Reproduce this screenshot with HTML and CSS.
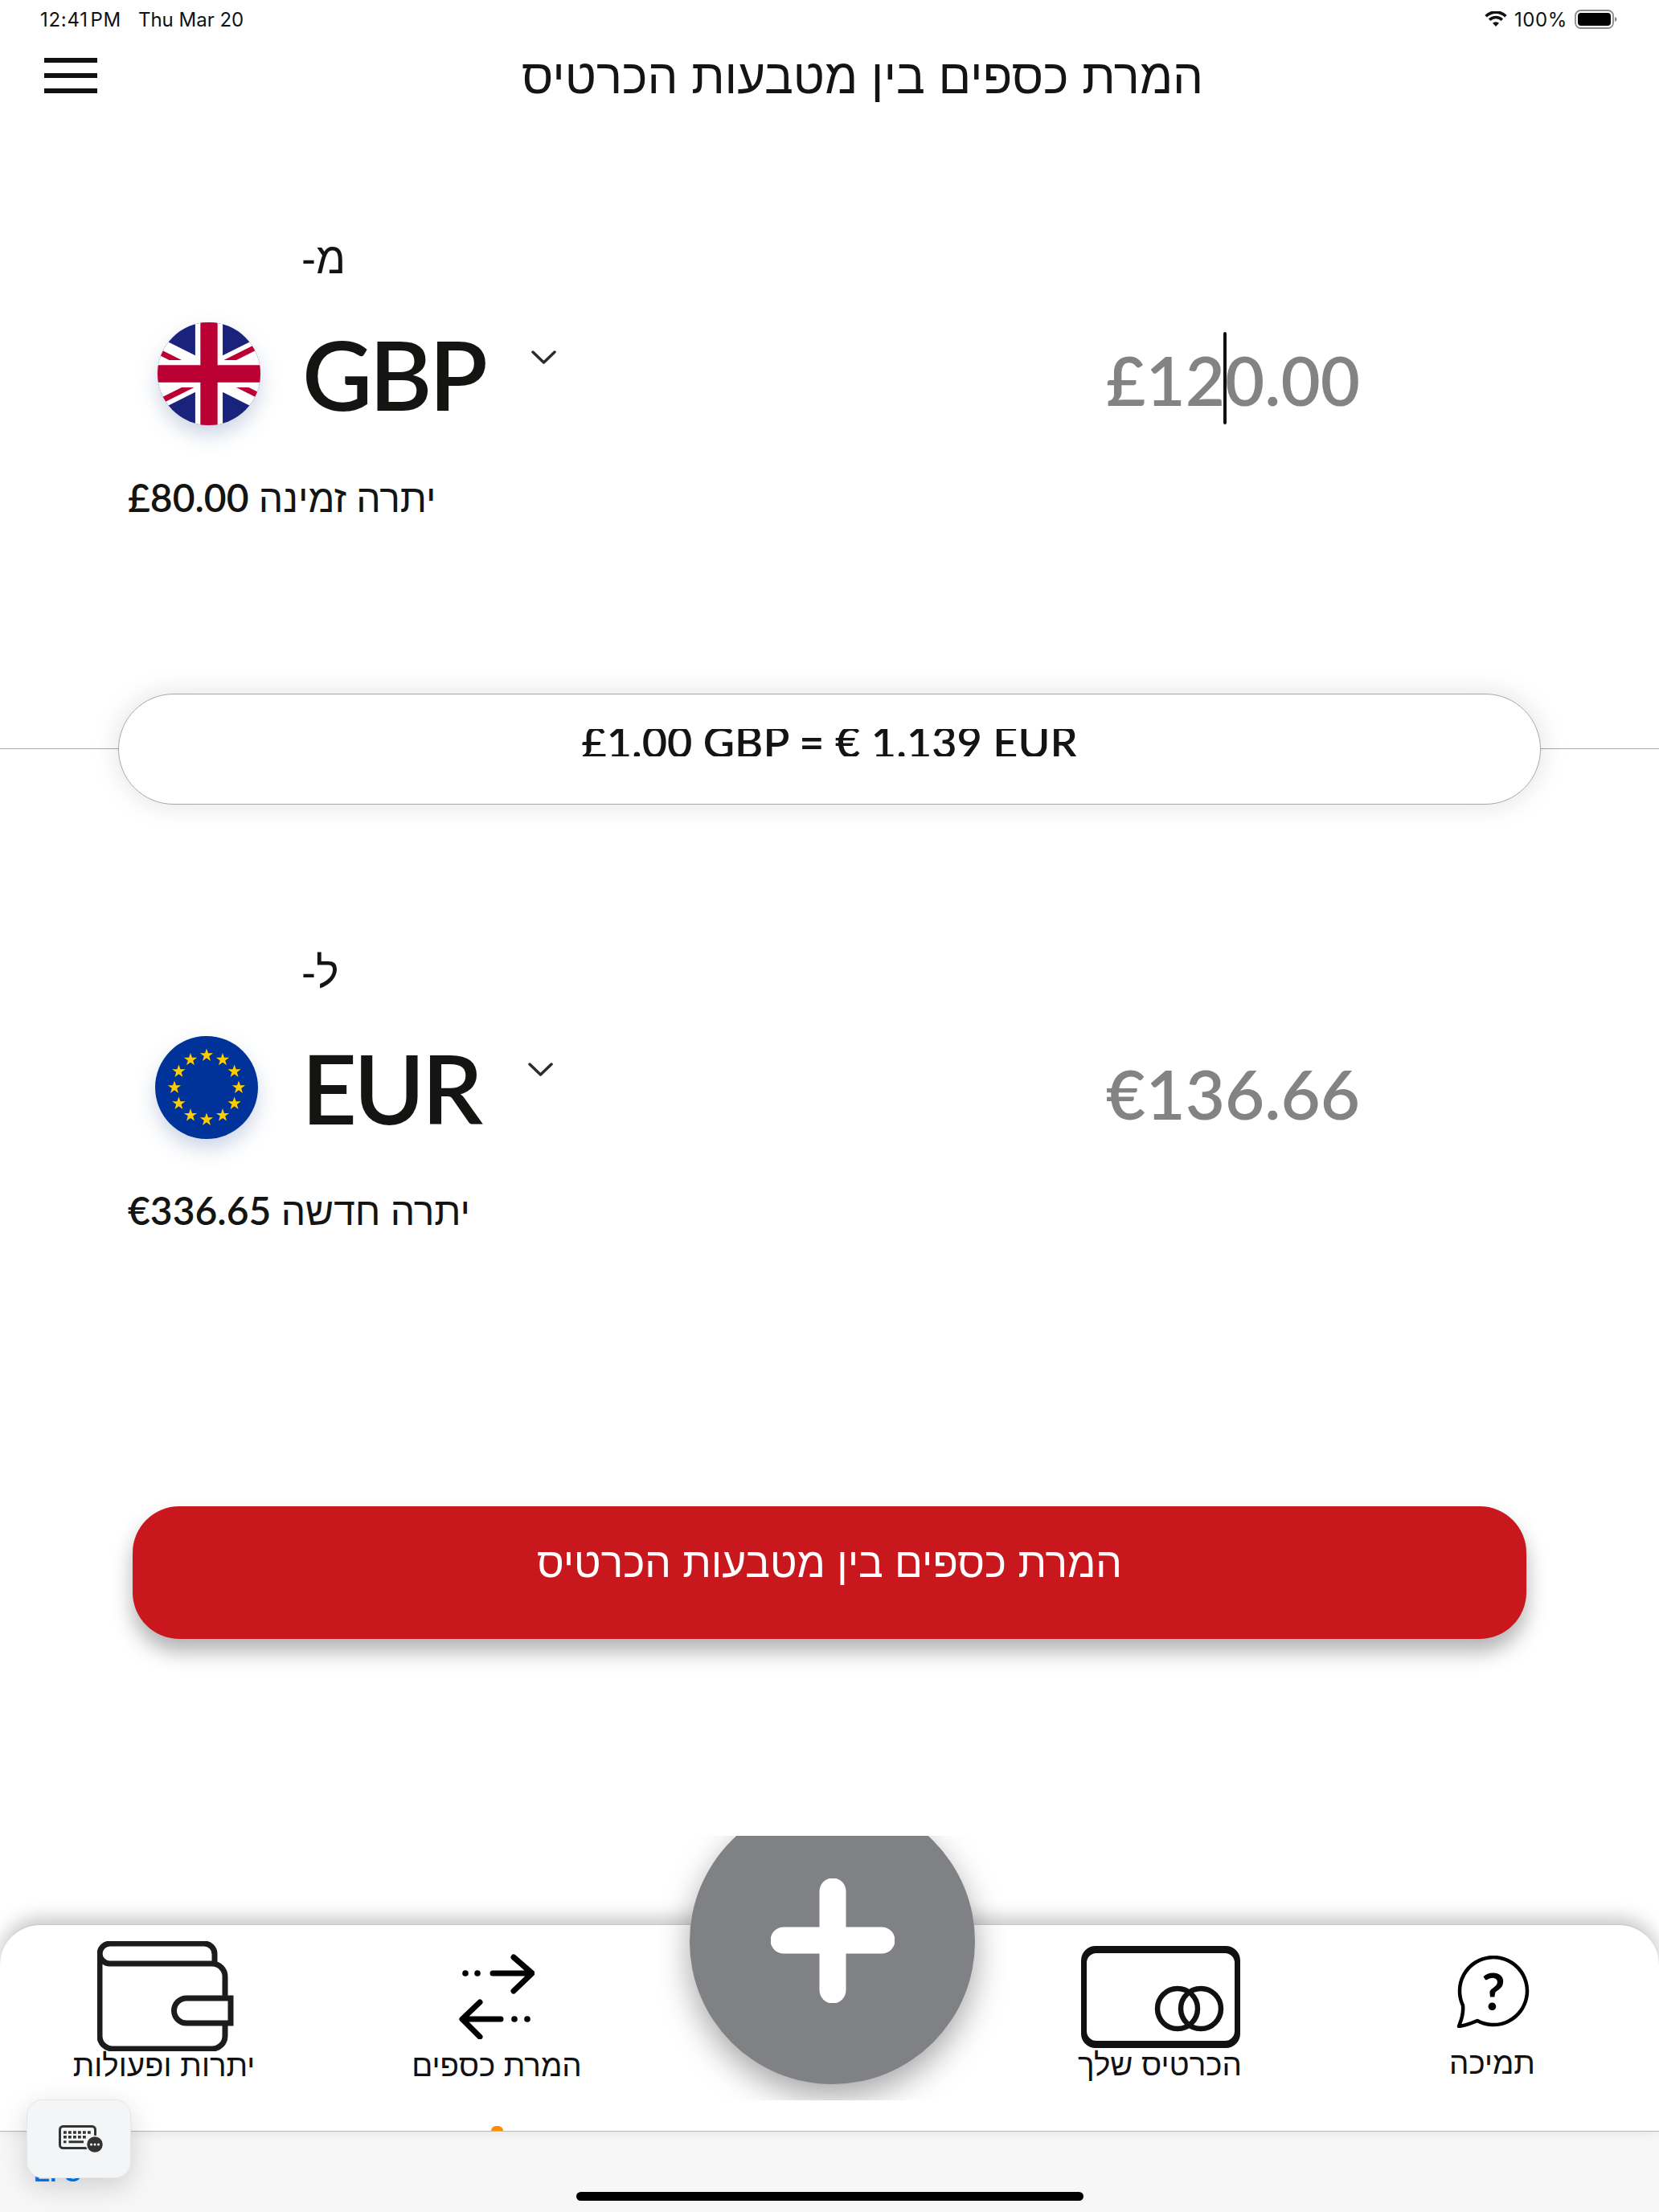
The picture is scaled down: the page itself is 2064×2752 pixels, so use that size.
FILE: index.html
```html
<!DOCTYPE html>
<html lang="he">
<head>
<meta charset="utf-8">
<title>המרת כספים בין מטבעות הכרטיס</title>
<link rel="stylesheet" href="styles.css">
</head>
<body>
<div class="page">
  <div class="status">
    <div class="status-left"><span class="clock">12:41&#8202;PM</span><span>Thu Mar 20</span></div>
    <div class="status-right">
      <svg class="wifi" width="28" height="20" viewBox="0 0 30 22"><path d="M15 21 10.6 16.2a6.4 6.4 0 0 1 8.800 0ZM7.700 13.200 5 10.400a14.400 14.400 0 0 1 20 0l-2.700 2.800a10.400 10.400 0 0 0-14.600 0ZM2.800 8.200 0 5.400a21.400 21.400 0 0 1 30 0l-2.800 2.800a17.400 17.400 0 0 0-24.400 0Z" fill="#111"/></svg>
      <span class="pct">100%</span>
      <svg class="battery" width="53" height="24" viewBox="0 0 53 24"><rect x="1" y="1" width="47" height="22" rx="6.500" fill="none" stroke="#8a8a8a" stroke-width="1.800"/><rect x="4" y="4" width="41" height="16" rx="4" fill="#000"/><path d="M50 9v6c1.600-.5 2.600-1.600 2.600-3S51.600 9.500 50 9Z" fill="#8a8a8a"/></svg>
    </div>
  </div>

  <header class="head">
    <div class="burger"><i></i><i></i><i></i></div>
    <h1 class="title" dir="rtl">המרת כספים בין מטבעות הכרטיס</h1>
  </header>

  <section class="cur cur-from">
    <div class="label" dir="rtl">מ-</div>
    <div class="cur-row">
      <div class="flag">
        <svg width="128" height="128" viewBox="15 0 30 30">
          <defs>
            <clipPath id="tri"><path d="M30,15 h30 v15 z v15 h-30 z h-30 v-15 z v-15 h30 z"/></clipPath>
          </defs>
          <rect width="60" height="30" fill="#1A237B"/>
          <path d="M0,0 L60,30 M60,0 L0,30" stroke="#fff" stroke-width="6"/>
          <path d="M0,0 L60,30 M60,0 L0,30" clip-path="url(#tri)" stroke="#BB0033" stroke-width="3.200"/>
          <path d="M30,0 v30 M0,15 h60" stroke="#fff" stroke-width="8"/>
          <path d="M30,0 v30 M0,15 h60" stroke="#BB0033" stroke-width="5"/>
        </svg>
      </div>
      <div class="code">GBP</div>
      <svg class="chev" width="31" height="19" viewBox="0 0 31 19"><path d="M2 3 15.500 16 29 3" fill="none" stroke="#2b2b2b" stroke-width="3.500" stroke-linecap="round" stroke-linejoin="round"/></svg>
      <div class="amount">£12<span class="caret"></span>0.00</div>
    </div>
    <div class="balance" dir="rtl">יתרה זמינה <bdi class="money">£80.00</bdi></div>
  </section>

  <div class="rate">
    <div class="pill"><span class="rate-text">£1.00 GBP = € 1.139 EUR</span></div>
  </div>

  <section class="cur cur-to">
    <div class="label" dir="rtl">ל-</div>
    <div class="cur-row">
      <div class="flag">
        <svg width="128" height="128" viewBox="0 0 128 128">
          <defs>
            <polygon id="star" points="0,-8.500 2,-2.700 8.100,-2.700 3.200,1 5,6.900 0,3.300 -5,6.900 -3.200,1 -8.100,-2.700 -2,-2.700" fill="#FFCC00"/>
          </defs>
          <rect width="128" height="128" fill="#003399"/>
          <use href="#star" x="64" y="24"/><use href="#star" x="84" y="29.400"/><use href="#star" x="98.600" y="44"/><use href="#star" x="104" y="64"/><use href="#star" x="98.600" y="84"/><use href="#star" x="84" y="98.600"/><use href="#star" x="64" y="104"/><use href="#star" x="44" y="98.600"/><use href="#star" x="29.400" y="84"/><use href="#star" x="24" y="64"/><use href="#star" x="29.400" y="44"/><use href="#star" x="44" y="29.400"/>
        </svg>
      </div>
      <div class="code">EUR</div>
      <svg class="chev" width="31" height="19" viewBox="0 0 31 19"><path d="M2 3 15.500 16 29 3" fill="none" stroke="#2b2b2b" stroke-width="3.500" stroke-linecap="round" stroke-linejoin="round"/></svg>
      <div class="amount">€136.66</div>
    </div>
    <div class="balance" dir="rtl">יתרה חדשה <bdi class="money">€336.65</bdi></div>
  </section>

  <div class="cta-wrap">
    <button class="cta" dir="rtl">המרת כספים בין מטבעות הכרטיס</button>
  </div>

  <nav class="nav">
    <div class="nav-item item-wallet">
      <svg width="170" height="137" viewBox="0 0 170 137"><path d="M146 28V16A13 13 0 0 0 133 3H16A13 13 0 0 0 3 16V118a16 16 0 0 0 16 16H143a16 16 0 0 0 16-16V102M159 70V44A16 16 0 0 0 143 28H16A13 13 0 0 1 3 15" fill="none" stroke="#1c1c1c" stroke-width="7"/><path d="M166 71H111a15.500 15.500 0 0 0 0 31H166Z" fill="none" stroke="#1c1c1c" stroke-width="7"/></svg>
      <span class="nav-label" dir="rtl">יתרות ופעולות</span>
    </div>
    <div class="nav-item item-swap">
      <svg width="94" height="106" viewBox="0 0 94 106"><path d="M42 24H88M68 4 91 24 68 46M52 81H6M26 60 4 81 26 103" fill="none" stroke="#000" stroke-width="7" stroke-linecap="round" stroke-linejoin="round"/><circle cx="8" cy="24" r="3.800"/><circle cx="23" cy="24" r="3.800"/><circle cx="69" cy="81" r="3.800"/><circle cx="85" cy="81" r="3.800"/></svg>
      <span class="nav-label" dir="rtl">המרת כספים</span>
    </div>
    <div class="nav-item item-card">
      <svg width="198" height="129" viewBox="0 0 198 129"><path fill-rule="evenodd" d="M18 1H180A18 18 0 0 1 198 19V110A18 18 0 0 1 180 128H18A18 18 0 0 1 0 110V19A18 18 0 0 1 18 1ZM19 10A12 12 0 0 0 7 22V107A12 12 0 0 0 19 119H179A12 12 0 0 0 191 107V22A12 12 0 0 0 179 10Z" fill="#111"/><circle cx="120" cy="79" r="25" fill="none" stroke="#111" stroke-width="6.500"/><circle cx="149" cy="79" r="25" fill="none" stroke="#111" stroke-width="6.500"/></svg>
      <span class="nav-label" dir="rtl">הכרטיס שלך</span>
    </div>
    <div class="nav-item item-help">
      <svg width="92" height="90" viewBox="0 0 92 90"><path d="M9 62A42 42 0 1 1 27 81C20 84 12 87 4 88 7 80 10 72 9 62Z" fill="none" stroke="#000" stroke-width="4.500" stroke-linejoin="round"/><text x="47" y="68" class="help-q">?</text></svg>
      <span class="nav-label" dir="rtl">תמיכה</span>
    </div>
    <span class="nav-dot"></span>
  </nav>
  <div class="safe"><span class="home-bar"></span></div>

  <div class="fab-clip">
    <div class="fab">
      <svg width="154" height="155" viewBox="0 0 154 155"><path d="M77 16V139M16 77H138" fill="none" stroke="#fff" stroke-width="33" stroke-linecap="round"/></svg>
    </div>
  </div>

  <span class="peek">EI O</span>
  <div class="kbd">
    <svg width="56" height="35" viewBox="0 0 56 35">
      <rect x="1.500" y="1.500" width="44" height="27" rx="4" fill="none" stroke="#333" stroke-width="3"/>
      <path d="M6 9H41M6 14.700H36" stroke="#333" stroke-width="3.500" stroke-dasharray="3.800 2.200"/>
      <path d="M6 20.700H9.500M12.500 20.700H31" stroke="#333" stroke-width="3"/>
      <circle cx="45" cy="24" r="10.500" fill="#333" stroke="#f3f5f6" stroke-width="1.500"/>
      <circle cx="40.500" cy="24" r="1.500" fill="#fff"/><circle cx="45" cy="24" r="1.500" fill="#fff"/><circle cx="49.500" cy="24" r="1.500" fill="#fff"/>
    </svg>
  </div>
</div>
</body>
</html>
```
FILE: styles.css
```css
* { box-sizing: border-box; }
html, body { margin: 0; padding: 0; background: #fff; }
.page {
  position: relative;
  width: 2064px;
  height: 2752px;
  overflow: hidden;
  background: #fff;
  color: #141412;
  font-family: "Lato", "Liberation Sans", sans-serif;
  display: flex;
  flex-direction: column;
}
.status {
  height: 48px;
  padding: 0 52px 0 50px;
  display: flex;
  justify-content: space-between;
  align-items: center;
  font-family: "Inter", "Liberation Sans", sans-serif;
  font-size: 24px;
  color: #111;
}
.status-left { display: flex; gap: 21px; }
.clock { letter-spacing: .7px; }
.status-right { display: flex; align-items: center; gap: 9px; }
.pct { letter-spacing: .6px; }
.head {
  height: 92px;
  padding-left: 55px;
  display: flex;
  align-items: flex-start;
}
.burger { display: flex; flex-direction: column; gap: 13px; padding-top: 24px; width: 66px; }
.burger i { display: block; height: 6px; background: #111; }
.title {
  margin: 14px 0 0 528px;
  font: 400 60px/68px "Liberation Sans", sans-serif;
  color: #141412;
  white-space: nowrap;
}
.cur { display: flex; flex-direction: column; }
.cur-from { margin-top: 151px; }
.cur-to { margin-top: 178px; }
.label {
  width: 60px;
  margin-left: 375px;
  font: 400 54px/60px "Liberation Sans", sans-serif;
  text-align: left;
}
.cur-row {
  height: 140px;
  margin-top: 44px;
  display: flex;
  align-items: center;
}
.flag {
  width: 128px;
  height: 128px;
  margin-left: 196px;
  border-radius: 50%;
  overflow: hidden;
  box-shadow: 0 12px 24px rgba(90, 120, 170, .3);
  flex: none;
}
.cur-to .flag { margin-left: 193px; }
.flag svg { display: block; }
.code {
  width: 285px;
  margin-left: 52px;
  font-size: 120px;
  line-height: 140px;
  font-weight: 600;
  letter-spacing: -4px;
}
.cur-to .code { margin-left: 54px; width: 282px; }
.chev { margin-top: -42px; flex: none; }
.cur-to .chev { margin-top: -46px; }
.amount {
  margin-left: auto;
  margin-right: 372px;
  padding-top: 14px;
  font-size: 85px;
  font-weight: 600;
  line-height: 140px;
  color: #838383;
  white-space: nowrap;
}
.caret {
  display: inline-block;
  width: 4px;
  height: 115px;
  margin: 0 -2px;
  vertical-align: -23px;
  background: #111;
  border-radius: 2px;
}
.balance {
  margin: 54px 0 0 159px;
  width: max-content;
  font: 400 48px/60px "Lato", "Liberation Sans", sans-serif;
}
.cur-to .balance { margin-top: 53px; }
.money { font-weight: 600; }
.rate {
  position: relative;
  margin: 214px 147px 0 147px;
}
.rate::before {
  content: "";
  position: absolute;
  left: -147px;
  right: -147px;
  top: 68px;
  height: 1px;
  background: #a8a8a8;
}
.pill {
  position: relative;
  height: 138px;
  border: 1px solid #a8a8a8;
  border-radius: 69px;
  background: #fff;
  box-shadow: 0 0 34px rgba(0, 0, 0, .12);
  display: flex;
  justify-content: center;
}
.rate-text {
  display: block;
  height: 34px;
  margin-top: 43px;
  overflow: hidden;
  font-size: 54px;
  line-height: 31px;
  font-weight: 600;
  white-space: nowrap;
}
.cta-wrap { padding: 0 165px; margin-top: 338px; }
.cta {
  display: block;
  width: 100%;
  height: 165px;
  border: 0;
  border-radius: 58px;
  background: #C8171D;
  color: #fff;
  font: 400 51.500px/1 "Liberation Sans", sans-serif;
  padding: 0 0 24px;
  box-shadow: 0 16px 26px rgba(0, 0, 0, .3);
}
.nav {
  position: relative;
  margin-top: auto;
  height: 258px;
  background: #fff;
  border-top: 1px solid #c8c8c8;
  border-bottom: 1px solid #b8b8b8;
  border-radius: 50px 50px 0 0;
  box-shadow: 0 -8px 22px rgba(0, 0, 0, .22);
}
.nav-item { position: absolute; top: 0; display: flex; flex-direction: column; align-items: center; }
.nav-item svg { display: block; flex: none; }
.nav-label { font: 400 38.500px/40px "Liberation Sans", sans-serif; white-space: nowrap; color: #111; }
.item-wallet { left: 91px; width: 226px; padding-top: 20px; }
.item-wallet svg { margin-left: 4px; }
.item-wallet .nav-label { margin-top: -2px; }
.item-swap { left: 514px; width: 208px; padding-top: 36px; }
.item-swap .nav-label { margin-top: 13px; }
.item-card { left: 1342px; width: 202px; padding-top: 25px; }
.item-card svg { margin-left: 2px; }
.item-help { left: 1804px; width: 105px; padding-top: 38px; }
.item-help .nav-label { margin-top: 24px; }
.help-q { font: 700 64px "Lato", sans-serif; text-anchor: middle; fill: #000; }
.nav-dot {
  position: absolute;
  left: 611px;
  bottom: 0;
  width: 15px;
  height: 6px;
  border-radius: 8px 8px 0 0;
  background: #F78F00;
}
.safe {
  height: 100px;
  background: #f7f7f7;
  display: flex;
  justify-content: flex-start;
  padding: 75px 0 0 717px;
}
.home-bar { display: block; width: 631px; height: 11px; border-radius: 6px; background: #000; }
.fab-clip {
  position: absolute;
  left: 820px;
  top: 2284px;
  width: 430px;
  height: 329px;
  overflow: hidden;
}
.fab {
  position: absolute;
  left: 38px;
  top: -46px;
  width: 355px;
  height: 355px;
  border-radius: 50%;
  background: #808184;
  box-shadow: 0 16px 40px rgba(0, 0, 0, .35);
  display: flex;
  align-items: center;
  justify-content: center;
}
.fab svg { margin-top: -2px; }
.peek {
  position: absolute;
  left: 42px;
  top: 2684px;
  font: 700 30px/40px "Liberation Sans", sans-serif;
  color: #007AFF;
}
.kbd {
  position: absolute;
  left: 33px;
  top: 2612px;
  width: 130px;
  height: 98px;
  border-radius: 20px;
  background: #f3f5f6;
  border: 1px solid #e4e6e7;
  box-shadow: 0 10px 34px rgba(0, 0, 0, .16);
  display: flex;
  align-items: center;
  justify-content: center;
}
.kbd svg { margin-left: 6px; }
```
